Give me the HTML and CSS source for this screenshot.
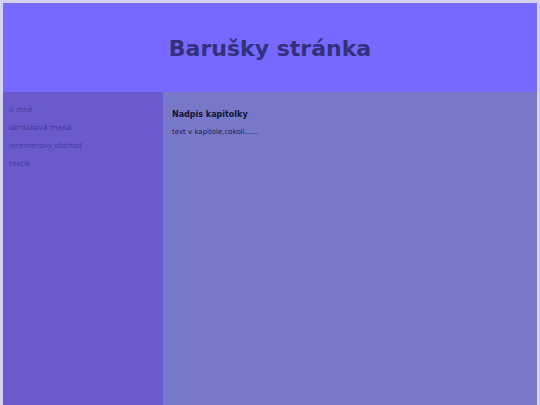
FILE: index.html
```html
<!DOCTYPE html>
<html lang="cs">
<head>
<meta charset="utf-8">
<title>Barušky stránka</title>
<link rel="stylesheet" href="styles.css">
</head>
<body>
<div class="page">
  <header class="header">
    <h1 class="title">Barušky stránka</h1>
  </header>
  <div class="body">
    <nav class="menu">
      <a class="menu-link" href="#">o mně</a>
      <a class="menu-link" href="#">obrázková mapa</a>
      <a class="menu-link" href="#">internetový obchod</a>
      <a class="menu-link" href="#">textík</a>
    </nav>
    <main class="content">
      <h2 class="chapter">Nadpis kapitolky</h2>
      <p class="text">text v kapitole,cokoli......</p>
    </main>
  </div>
</div>
</body>
</html>
```

FILE: styles.css
```css
html, body {
  margin: 0;
  padding: 0;
  height: 100%;
}
body {
  background: #d4d2ee;
  padding: 3px 3px 0 3px;
  box-sizing: border-box;
  font-family: "DejaVu Sans", Verdana, sans-serif;
}
.page {
  display: flex;
  flex-direction: column;
  height: 100%;
}
.header {
  background: #7569ff;
  height: 89px;
  padding-top: 2px;
  box-sizing: border-box;
  display: flex;
  align-items: center;
  justify-content: center;
}
.title {
  margin: 0;
  font-size: 22px;
  font-weight: bold;
  color: #33307c;
}
.body {
  flex: 1;
  display: flex;
}
.menu {
  width: 160px;
  background: #6a5acd;
  display: flex;
  flex-direction: column;
  padding: 13px 0 0 6px;
  box-sizing: border-box;
}
.menu-link {
  font-size: 7.5px;
  color: #4a3ba6;
  text-decoration: none;
  height: 18px;
}
.content {
  flex: 1;
  background: #7878c8;
  padding: 18px 9px;
}
.chapter {
  margin: 0 0 9px 0;
  font-size: 8px;
  font-weight: bold;
  color: #111133;
}
.text {
  margin: 0;
  font-size: 7px;
  color: #1a1a40;
}
```
